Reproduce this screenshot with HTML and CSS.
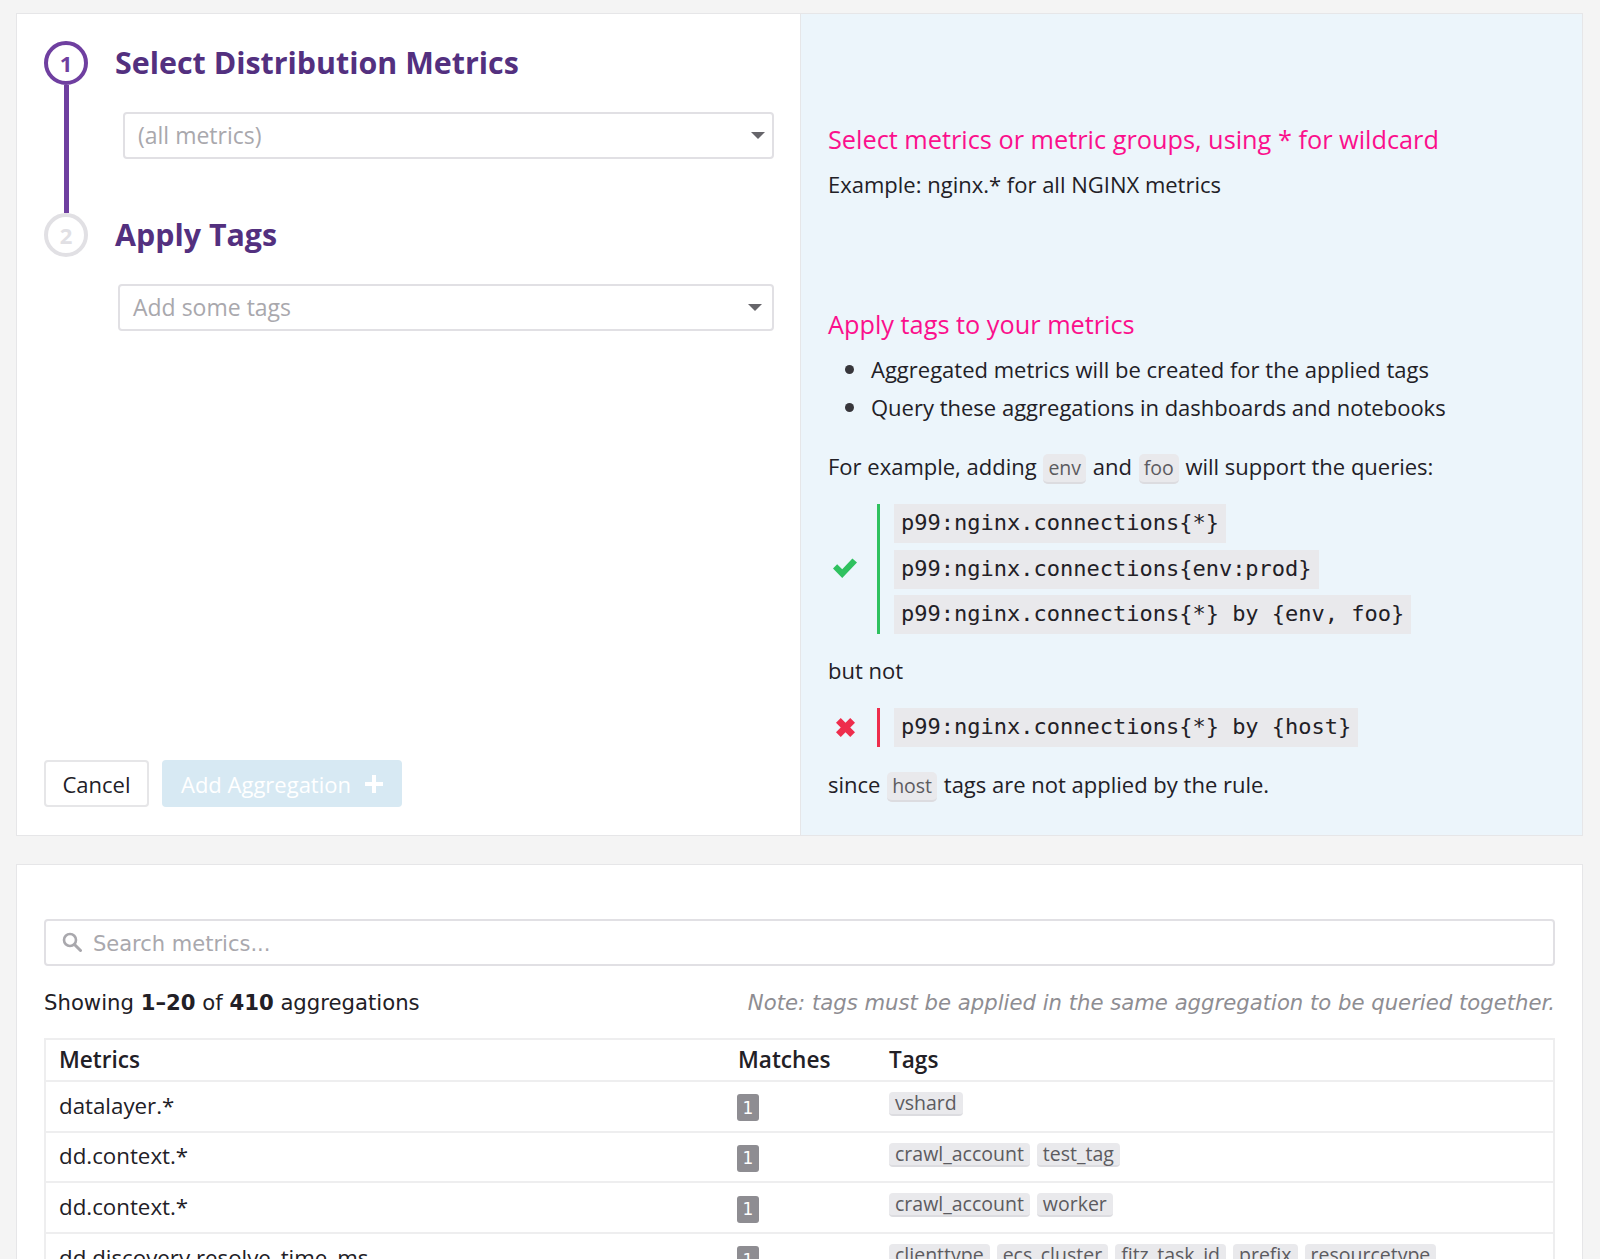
FILE: index.html
```html
<!DOCTYPE html>
<html lang="en">
<head>
<meta charset="utf-8">
<title>Distribution Metrics</title>
<link rel="stylesheet" href="styles.css">
</head>
<body>
<section class="card setup">
  <div class="form-pane">
    <div class="step step-one">
      <div class="rail">
        <span class="bullet active">1</span>
        <span class="connector"></span>
      </div>
      <div class="step-body">
        <h2>Select Distribution Metrics</h2>
        <div class="select select-metrics"><span>(all metrics)</span><i class="caret"></i></div>
      </div>
    </div>
    <div class="step step-two">
      <div class="rail">
        <span class="bullet">2</span>
      </div>
      <div class="step-body">
        <h2>Apply Tags</h2>
        <div class="select select-tags"><span>Add some tags</span><i class="caret"></i></div>
      </div>
    </div>
    <div class="actions">
      <button class="btn cancel">Cancel</button>
      <button class="btn add">Add Aggregation
        <svg class="plus" viewBox="0 0 18 18" width="18" height="18"><path d="M7 0h4v7h7v4h-7v7H7v-7H0V7h7z" fill="#fff"/></svg>
      </button>
    </div>
  </div>
  <aside class="help-pane">
    <h3 class="help-first">Select metrics or metric groups, using * for wildcard</h3>
    <p class="tight">Example: nginx.* for all NGINX metrics</p>
    <h3 class="help-second">Apply tags to your metrics</h3>
    <ul>
      <li>Aggregated metrics will be created for the applied tags</li>
      <li>Query these aggregations in dashboards and notebooks</li>
    </ul>
    <p class="example-line">For example, adding <code class="chip">env</code> and <code class="chip">foo</code> will support the queries:</p>
    <div class="queries good">
      <span class="mark"><svg viewBox="0 0 26 22" width="24" height="20" preserveAspectRatio="none"><path d="M0 11.5l4.5-4.500 5.500 5.500L21 .5l5 4.500L10 22z" fill="#2fc15f"/></svg></span>
      <div class="query-list">
        <code>p99:nginx.connections{*}</code>
        <code>p99:nginx.connections{env:prod}</code>
        <code>p99:nginx.connections{*} by {env, foo}</code>
      </div>
    </div>
    <p class="but-not">but not</p>
    <div class="queries bad">
      <span class="mark"><svg viewBox="0 0 20 20" width="19" height="19" preserveAspectRatio="none"><path d="M5 0l5 5 5-5 5 5-5 5 5 5-5 5-5-5-5 5-5-5 5-5-5-5z" fill="#ee2d4c"/></svg></span>
      <div class="query-list">
        <code>p99:nginx.connections{*} by {host}</code>
      </div>
    </div>
    <p class="since">since <code class="chip">host</code> tags are not applied by the rule.</p>
  </aside>
</section>
<section class="card list">
  <div class="search">
    <svg class="search-icon" viewBox="0 0 20 20" width="20" height="20"><circle cx="8" cy="8" r="6" fill="none" stroke="#a9a8ad" stroke-width="2.6"/><path d="M12.5 12.5l6 6" stroke="#a9a8ad" stroke-width="3" stroke-linecap="round"/></svg>
    <span class="search-text">Search metrics...</span>
  </div>
  <div class="summary">
    <span>Showing <b>1–20</b> of <b>410</b> aggregations</span>
    <em>Note: tags must be applied in the same aggregation to be queried together.</em>
  </div>
  <table>
    <thead>
      <tr><th class="col-metric">Metrics</th><th class="col-matches">Matches</th><th>Tags</th></tr>
    </thead>
    <tbody>
      <tr><td>datalayer.*</td><td><span class="count">1</span></td><td><span class="tag">vshard</span></td></tr>
      <tr><td>dd.context.*</td><td><span class="count">1</span></td><td><span class="tag">crawl_account</span><span class="tag">test_tag</span></td></tr>
      <tr><td>dd.context.*</td><td><span class="count">1</span></td><td><span class="tag">crawl_account</span><span class="tag">worker</span></td></tr>
      <tr><td>dd.discovery.resolve_time_ms</td><td><span class="count">1</span></td><td><span class="tag">clienttype</span><span class="tag">ecs_cluster</span><span class="tag">fitz_task_id</span><span class="tag">prefix</span><span class="tag">resourcetype</span></td></tr>
    </tbody>
  </table>
</section>
</body>
</html>
```

FILE: styles.css
```css
* { box-sizing: border-box; }
html { height: 1259px; overflow: hidden; }
body {
  margin: 0;
  height: 1259px;
  overflow: hidden;
  padding: 13px 17px 0 16px;
  background: #f4f4f4;
  font-family: "Open Sans", sans-serif;
  font-size: 22px;
  color: #222026;
}
.card {
  background: #fff;
  border: 1px solid #e6e6e8;
}
.setup {
  display: flex;
  height: 823px;
  margin-bottom: 28px;
}
.form-pane {
  width: 783px;
  flex: none;
  display: flex;
  flex-direction: column;
  padding: 27px 26px 28px 27px;
}
.step { display: flex; }
.step-one { height: 172px; }
.rail {
  width: 44px;
  flex: none;
  display: flex;
  flex-direction: column;
  align-items: center;
}
.bullet {
  width: 44px;
  height: 44px;
  flex: none;
  border-radius: 50%;
  border: 4px solid #e1e0e4;
  color: #e1e0e4;
  font-weight: 700;
  font-size: 22px;
  display: flex;
  align-items: center;
  justify-content: center;
}
.bullet.active { border-color: #6f3fa0; color: #6f3fa0; }
.connector { flex: 1; width: 5px; background: #6f3fa0; }
.step-body { flex: 1; padding-left: 27px; }
h2 {
  margin: 0;
  height: 44px;
  line-height: 44px;
  font-size: 30.4px;
  font-weight: 700;
  color: #53307f;
}
.select {
  height: 47px;
  border: 2px solid #e1e0e4;
  border-radius: 4px;
  display: flex;
  align-items: center;
  justify-content: space-between;
  padding: 0 7px 2px 13px;
  color: #a9a8ad;
  font-size: 23px;
}
.select-metrics { margin: 27px 0 0 8px; }
.select-tags { margin: 27px 0 0 3px; padding-right: 10px; }
.caret {
  width: 0;
  height: 0;
  margin-top: 2px;
  border-left: 7px solid transparent;
  border-right: 7px solid transparent;
  border-top: 7px solid #66656a;
}
.actions {
  margin-top: auto;
  display: flex;
  gap: 13px;
}
.btn {
  height: 47px;
  font: inherit;
  font-size: 22px;
  border-radius: 4px;
  display: flex;
  align-items: center;
}
.cancel {
  width: 105px;
  justify-content: center;
  background: #fff;
  border: 2px solid #e6e6e8;
  color: #222026;
}
.add {
  width: 240px;
  justify-content: center;
  gap: 14px;
  background: #d7e9f3;
  border: 0;
  color: #fff;
}
.help-pane {
  flex: 1;
  padding: 0 27px;
  background: #ecf5fb;
  border-left: 1px solid #e6e6e8;
}
h3 {
  margin: 0;
  font-size: 25.3px;
  font-weight: 400;
  line-height: 34px;
  color: #fb0f8c;
}
.help-first { padding-top: 108px; }
.help-second { margin-top: 106px; }
p { margin: 0; line-height: 34px; }
.tight { margin-top: 11px; }
ul { margin: 10px 0 0; padding: 0 0 0 17px; list-style: none; }
li { line-height: 37.7px; display: flex; align-items: center; }
li::before {
  content: "";
  flex: none;
  width: 9px;
  height: 9px;
  margin-right: 17px;
  border-radius: 50%;
  background: #37363b;
}
.example-line { margin-top: 23px; }
.chip {
  font-family: "Open Sans", sans-serif;
  font-size: 19.5px;
  color: #5c5b60;
  background: #e9e9ec;
  border-bottom: 2px solid #dcdce0;
  border-radius: 5px;
  padding: 0 5px 1px;
  margin: 0 1px;
}
.queries {
  display: flex;
  align-items: center;
  margin-top: 19px;
}
.mark {
  width: 34px;
  flex: none;
  display: flex;
  justify-content: center;
}
.good .mark { margin-bottom: 3px; }
.query-list {
  margin-left: 15px;
  padding-left: 14px;
  display: flex;
  flex-direction: column;
  align-items: flex-start;
  gap: 6.5px;
}
.good .query-list { border-left: 3px solid #2fc15f; }
.bad .query-list { border-left: 3px solid #ee2d4c; }
.query-list code {
  font-family: "DejaVu Sans Mono", monospace;
  font-size: 22px;
  line-height: 38px;
  height: 39px;
  background: #e9e9ec;
  padding: 0 7px;
}
.but-not { margin-top: 19px; }
.queries.bad { margin-top: 21px; }
.since { margin-top: 20px; }
.list {
  height: 400px;
  padding: 54px 27px 0 27px;
}
.search {
  height: 47px;
  border: 2px solid #e1e0e4;
  border-radius: 4px;
  display: flex;
  align-items: center;
  gap: 11px;
  padding: 0 16px 1px;
  font-family: "DejaVu Sans", sans-serif;
  font-size: 21px;
  color: #a9a8ad;
}
.search-text { padding-top: 3px; }
.summary {
  margin-top: 20px;
  display: flex;
  justify-content: space-between;
  line-height: 34px;
  font-family: "DejaVu Sans", sans-serif;
  font-size: 21.2px;
}
.summary b { font-weight: 700; }
.summary em { color: #8e8d92; }
table {
  width: 100%;
  margin-top: 18px;
  border-collapse: collapse;
  border: 2px solid #eeeeef;
  table-layout: fixed;
}
th, td {
  text-align: left;
  padding: 0 13px;
  border-bottom: 2px solid #eeeeef;
}
th { height: 42px; font-weight: 600; font-size: 22.6px; padding-bottom: 2px; }
td { height: 50.6px; vertical-align: middle; }
td:first-child { padding-bottom: 2px; font-size: 22.3px; }
.col-metric { width: 680px; }
.col-matches { width: 151px; }
.count {
  display: inline-flex;
  width: 22px;
  height: 27px;
  margin: -3px 0 0 -1px;
  align-items: center;
  justify-content: center;
  border-radius: 3px;
  background: #8e8d92;
  color: #fff;
  font-family: "DejaVu Sans", sans-serif;
  font-size: 17px;
  vertical-align: middle;
}
.tag {
  display: inline-block;
  height: 24px;
  line-height: 22px;
  padding: 0 6px;
  margin-right: 7px;
  background: #e9e9ec;
  border-bottom: 2px solid #dcdce0;
  border-radius: 4px;
  font-size: 19.5px;
  color: #5c5b60;
  vertical-align: 5px;
}
```
